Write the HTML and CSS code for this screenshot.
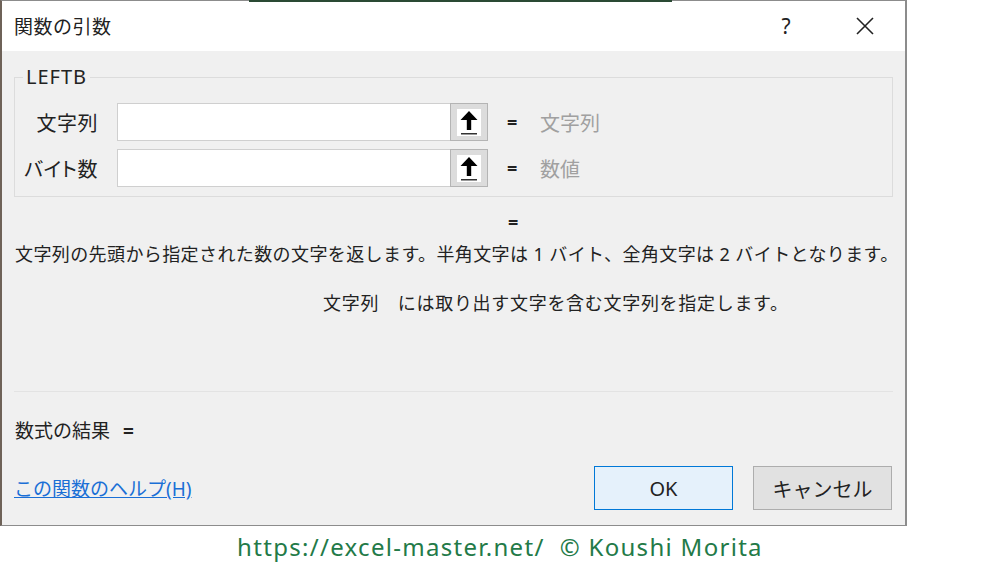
FILE: index.html
```html
<!DOCTYPE html>
<html lang="ja">
<head>
    <meta charset="UTF-8">
    <title>関数の引数</title>
    <link rel="stylesheet" href="styles.css">
</head>
<body>
<div class="dialog">
    <div class="titlebar">
        <div class="title">関数の引数</div>
        <div class="help">?</div>
        <div class="close">
            <svg width="18" height="18" viewBox="0 0 18 18"><path d="M1 1L17 17M17 1L1 17" stroke="#222" stroke-width="1.6" fill="none"/></svg>
        </div>
    </div>
    <div class="body">
        <fieldset class="group">
            <legend>LEFTB</legend>
            <div class="row">
                <div class="label">文字列</div>
                <div class="input"></div>
                <div class="pick">
                    <span class="pickIcon">
                        <svg width="24" height="27" viewBox="0 0 24 27"><path d="M12 2L3.5 11H9.8V21H14.2V11H20.5Z" fill="#000"/><rect x="4" y="24" width="16" height="1.5" fill="#333"/></svg>
                    </span>
                </div>
                <div class="eq">=</div>
                <div class="value">文字列</div>
            </div>
            <div class="row">
                <div class="label">バイト数</div>
                <div class="input"></div>
                <div class="pick">
                    <span class="pickIcon">
                        <svg width="24" height="27" viewBox="0 0 24 27"><path d="M12 2L3.5 11H9.8V21H14.2V11H20.5Z" fill="#000"/><rect x="4" y="24" width="16" height="1.5" fill="#333"/></svg>
                    </span>
                </div>
                <div class="eq">=</div>
                <div class="value">数値</div>
            </div>
        </fieldset>
        <div class="total">=</div>
        <div class="desc">文字列の先頭から指定された数の文字を返します。半角文字は 1 バイト、全角文字は 2 バイトとなります。</div>
        <div class="argDesc">文字列　には取り出す文字を含む文字列を指定します。</div>
        <div class="sep"></div>
        <div class="result">数式の結果 <b>=</b></div>
        <div class="bottom">
            <a class="helpLink" href="#">この関数のヘルプ(H)</a>
            <div class="btn ok">OK</div>
            <div class="btn cancel">キャンセル</div>
        </div>
    </div>
</div>
<div class="footer">https://excel-master.net/&nbsp;&nbsp;© Koushi Morita</div>
</body>
</html>
```

FILE: styles.css
```css
*{
    margin:0;
    padding:0;
    box-sizing: border-box;
}
body{
    background: #fff;
    font-family: "Noto Sans", "Noto Sans CJK JP", sans-serif;
    color: #222;
    width: 1000px;
    height: 563px;
    overflow: hidden;
}
.dialog{
    position: relative;
    width: 907px;
    height: 526px;
    background: #f0f0f0;
    border: 1px solid #8c8c8c;
    border-left: 2px solid #6e6258;
    border-right: 2px solid #8c8c8c;
}
/* excel window behind the dialog */
.dialog:before{
    content: "";
    position: absolute;
    left: 247px;
    top: -1px;
    width: 423px;
    height: 2px;
    background: #2a4a34;
}
.titlebar{
    height: 50px;
    background: #fff;
    display: flex;
    align-items: center;
    padding-left: 12px;
}
.title{
    font-size: 19px;
    letter-spacing: 0.5px;
    flex: 1;
}
.help{
    font-size: 21px;
    width: 20px;
    text-align: center;
    margin-right: 60px;
}
.close{
    width: 18px;
    height: 18px;
    margin-right: 31px;
}
.body{
    padding: 0 12px;
}
.group{
    margin-top: 13px;
    border: 1px solid #dcdcdc;
    padding: 13px 0 9px 0;
}
.group legend{
    margin-left: 8px;
    padding: 0 3px;
    font-size: 20px;
    letter-spacing: 1px;
    line-height: 26px;
}
.row{
    display: flex;
    align-items: center;
    height: 38px;
    margin-bottom: 8px;
}
.row:last-child{
    margin-bottom: 0;
}
.label{
    width: 83px;
    text-align: right;
    font-size: 20px;
    font-feature-settings: "palt";
    letter-spacing: 0.5px;
    margin-right: 19px;
}
.input{
    width: 333px;
    height: 38px;
    background: #fff;
    border: 1px solid #cfcfcf;
    border-right: none;
}
.pick{
    width: 38px;
    height: 38px;
    background: #dcdcdc;
    border: 1px solid #b4b4b4;
    display: flex;
    align-items: center;
    justify-content: center;
}
.pickIcon{
    width: 24px;
    height: 27px;
    background: #fff;
    display: flex;
}
.eq{
    font-size: 18px;
    font-weight: bold;
    margin-left: 19px;
    width: 33px;
}
.value{
    font-size: 20px;
    color: #a0a0a0;
}
.total{
    font-size: 18px;
    font-weight: bold;
    line-height: 24px;
    margin-top: 13px;
    padding-left: 494px;
}
.desc{
    font-size: 18px;
    letter-spacing: 0.4px;
    line-height: 24px;
    margin-top: 8px;
    padding-left: 1px;
    white-space: nowrap;
}
.argDesc{
    font-size: 18px;
    letter-spacing: 0.7px;
    line-height: 24px;
    margin-top: 25px;
    padding-left: 309px;
}
.sep{
    height: 1px;
    background: #e3e3e3;
    margin-top: 76px;
}
.result{
    font-size: 19px;
    line-height: 24px;
    margin-top: 27px;
    padding-left: 1px;
}
.result b{
    margin-left: 8px;
}
.bottom{
    display: flex;
    align-items: center;
    margin-top: 23px;
}
.helpLink{
    font-size: 19px;
    color: #1a6fd6;
    text-decoration: underline;
    flex: 1;
}
.btn{
    width: 139px;
    height: 44px;
    display: flex;
    align-items: center;
    justify-content: center;
    font-size: 20px;
}
.ok{
    background: #e5f1fb;
    border: 1px solid #0078d7;
    margin-right: 20px;
}
.cancel{
    background: #e1e1e1;
    border: 1px solid #adadad;
    margin-right: 1px;
}
.footer{
    text-align: center;
    font-size: 24px;
    letter-spacing: 1.3px;
    color: #237a48;
    line-height: 34px;
    margin-top: 4px;
}
```
